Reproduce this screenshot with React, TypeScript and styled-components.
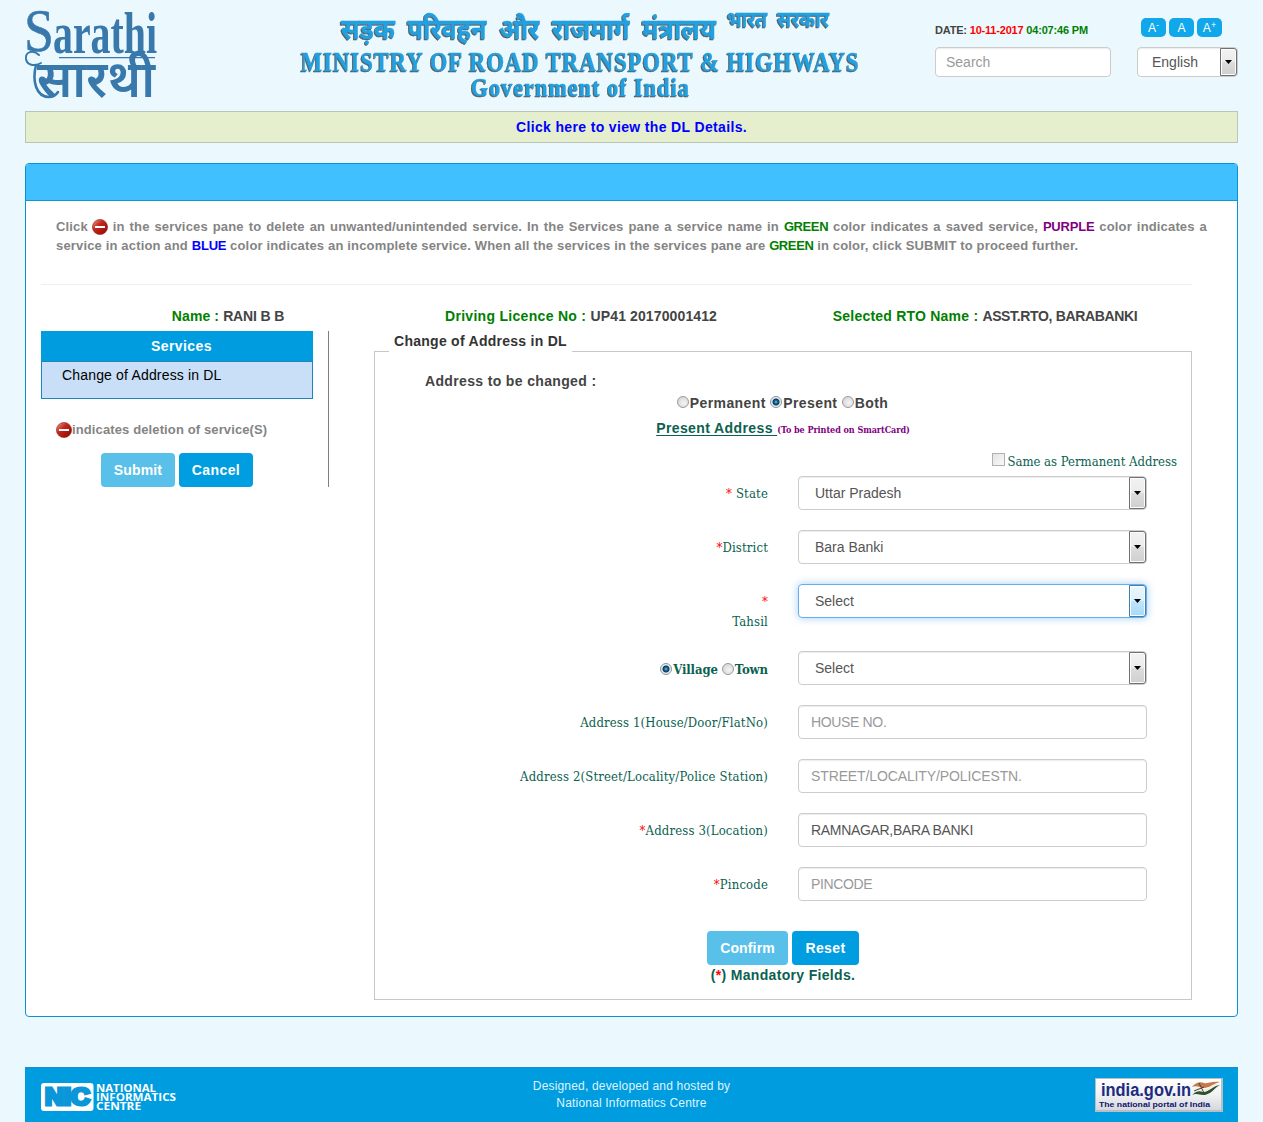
import React from "react";
import styled, { createGlobalStyle, css } from "styled-components";

const Global = createGlobalStyle`
  * { box-sizing: border-box; }
  body {
    margin: 0;
    background: #ebf9ff;
    font-family: "Liberation Sans", Arial, sans-serif;
    font-size: 14px;
    line-height: 20px;
    color: #444;
  }
`;

const Page = styled.div`
  width: 1213px;
  height: 1122px;
  margin: 0 auto;
  display: flex;
  flex-direction: column;
`;

const Header = styled.header`
  height: 111px;
  flex: none;
  display: flex;
`;
const LogoArea = styled.div`
  width: 271px;
  flex: none;
  padding-top: 5px;
`;
const TitleArea = styled.div`
  width: 639px;
  flex: none;
`;
const Tools = styled.div`
  flex: 1;
  padding-top: 18px;
`;
const ToolLine = styled.div<{ $h: number }>`
  display: flex;
  justify-content: space-between;
  height: ${(p) => p.$h}px;
`;
const DateText = styled.div`
  font-size: 11px;
  font-weight: bold;
  line-height: 24px;
  letter-spacing: -0.19px;
  white-space: nowrap;
`;
const SizeButtons = styled.div`
  display: flex;
  gap: 3px;
  padding-right: 16px;
`;
const SizeButton = styled.button`
  width: 25px;
  height: 19px;
  padding: 1px 0 0;
  border: 0;
  border-radius: 5px;
  background: #10a8ea;
  color: #fff;
  font: 12px/18px "Liberation Sans", Arial, sans-serif;
  sup {
    font-size: 9px;
    line-height: 0;
    vertical-align: 4px;
  }
`;

const Banner = styled.div`
  height: 32px;
  flex: none;
  border: 1px solid #bcc4ba;
  background: #e5eecd;
  color: #00f;
  font-weight: bold;
  letter-spacing: 0.35px;
  line-height: 30px;
  text-align: center;
`;

const Panel = styled.main`
  height: 854px;
  flex: none;
  margin-top: 20px;
  border: 1px solid #0a93d0;
  border-radius: 4px;
  background: #fff;
  overflow: hidden;
`;
const PanelHead = styled.div`
  height: 37px;
  background: #40c0ff;
  border-bottom: 1px solid #1295d1;
`;
const Notice = styled.p`
  margin: 0;
  padding: 16px 30px 0;
  height: 83px;
  font-size: 13px;
  font-weight: bold;
  line-height: 19px;
  letter-spacing: 0.16px;
  color: #848484;
  text-align: justify;
`;
const Ink = styled.span<{ $c: string; $ls?: number }>`
  color: ${(p) => p.$c};
  letter-spacing: ${(p) => (p.$ls === undefined ? "inherit" : p.$ls + "px")};
`;
const Rule = styled.div`
  height: 1px;
  margin: 0 45px 0 15px;
  background: #eee;
`;
const Holder = styled.div`
  display: grid;
  grid-template-columns: 374px 332px 476px;
  margin: 21px 0 0 15px;
  height: 25px;
  text-align: center;
  font-weight: bold;
  line-height: 21px;
`;
const Columns = styled.div`
  display: flex;
  align-items: flex-start;
  padding-left: 15px;
`;
const Side = styled.aside`
  width: 288px;
  height: 156px;
  border-right: 1px solid #808080;
`;
const ServiceHead = styled.div`
  width: 272px;
  height: 30px;
  background: #009ce0;
  color: #fff;
  font-weight: bold;
  letter-spacing: 0.4px;
  line-height: 30px;
  padding-left: 9px;
  text-align: center;
`;
const ServiceItem = styled.div`
  width: 272px;
  height: 38px;
  border: 1px solid #1c86bd;
  background: #c8dff7;
  color: #000;
  line-height: 27px;
  letter-spacing: 0.17px;
  padding-left: 20px;
`;
const Legend = styled.div`
  display: flex;
  align-items: center;
  height: 20px;
  margin: 21px 0 0 15px;
  color: #848484;
  font-size: 13px;
  font-weight: bold;
  letter-spacing: 0.12px;
`;
const Buttons = styled.div<{ $top: number; $left: number }>`
  display: flex;
  gap: 4px;
  padding: ${(p) => p.$top}px 0 0 ${(p) => p.$left}px;
`;
const Button = styled.button<{ $w: number; $dim?: boolean }>`
  width: ${(p) => p.$w}px;
  height: 34px;
  padding: 0;
  border: 0;
  border-radius: 4px;
  background: ${(p) => (p.$dim ? "#59c0ea" : "#009de0")};
  color: #fff;
  font: bold 14px "Liberation Sans", Arial, sans-serif;
  letter-spacing: ${(p) => (p.$dim ? 0.15 : 0.4)}px;
`;

const FormArea = styled.section`
  width: 818px;
  margin-left: 45px;
`;
const FormTitle = styled.h2`
  position: relative;
  width: 183px;
  height: 21px;
  margin: 0 0 -1px 15px;
  padding-left: 5px;
  background: #fff;
  color: #333;
  font-size: 14px;
  line-height: 20px;
  letter-spacing: 0.27px;
  white-space: nowrap;
`;
const FormBox = styled.div`
  height: 649px;
  border: 1px solid #c8c8c8;
`;
const Question = styled.div`
  padding: 19px 0 0 50px;
  font-weight: bold;
  letter-spacing: 0.35px;
  height: 41px;
`;
const Choices = styled.div`
  display: flex;
  justify-content: center;
  align-items: center;
  height: 20px;
  padding-right: 1px;
  font-weight: bold;
  letter-spacing: 0.42px;
  white-space: pre;
`;
const serif = css`
  font-family: "DejaVu Serif Condensed", "DejaVu Serif", serif;
`;
const AddressTitle = styled.div`
  height: 30px;
  line-height: 30px;
  text-align: center;
  white-space: pre;
  color: #0b6150;
  font-weight: bold;
  letter-spacing: 0.4px;
  u { text-decoration-thickness: 1px; text-underline-offset: 2px; }
  small {
    ${serif}
    font-size: 9px;
    letter-spacing: -0.07px;
    color: purple;
  }
`;
const SameAs = styled.label`
  ${serif}
  display: flex;
  justify-content: flex-end;
  align-items: center;
  gap: 2px;
  height: 20px;
  margin: 9px 14px 4px 0;
  color: #0b6150;
  font-size: 13px;
  line-height: 20px;
`;
const Box = styled.span`
  width: 13px;
  height: 13px;
  margin-top: -6px;
  border: 1px solid #b0b0b0;
  background: linear-gradient(135deg, #e2e2e2, #fafafa);
`;
const Dot = styled.span<{ $on?: boolean }>`
  width: 12px;
  height: 12px;
  margin: -3px 1px 0 0;
  border: 1px solid ${(p) => (p.$on ? "#8795a2" : "#9a9a9a")};
  border-radius: 50%;
  background: ${(p) =>
    p.$on
      ? "radial-gradient(circle at 50% 50%, #6cc4ee 0, #1c6fa0 1.5px, #0d3353 3px, #e8eef2 4px)"
      : "radial-gradient(circle at 60% 60%, #f4f4f4, #cfcfcf)"};
`;
const Row = styled.div<{ $h?: number }>`
  display: flex;
  justify-content: space-between;
  width: 772px;
  height: ${(p) => p.$h ?? 34}px;
  margin-bottom: 20px;
`;
const Label = styled.div<{ $bold?: boolean }>`
  ${serif}
  width: 393px;
  display: flex;
  flex-wrap: wrap;
  justify-content: flex-end;
  align-content: flex-start;
  align-items: center;
  padding-top: ${(p) => (p.$bold ? 9 : 8)}px;
  text-align: right;
  white-space: pre;
  color: #0b6150;
  font-size: 13px;
  font-weight: ${(p) => (p.$bold ? "bold" : "normal")};
  letter-spacing: ${(p) => (p.$bold ? -0.1 : 0.15)}px;
`;
const Stack = styled.div`
  display: flex;
  flex-direction: column;
  align-items: flex-end;
`;
const Star = styled.span`
  color: #f00;
`;
const field = css`
  border: 1px solid #ccc;
  border-radius: 4px;
  background: #fff;
  box-shadow: inset 0 1px 1px rgba(0, 0, 0, 0.075);
  color: #555;
  font-family: "Liberation Sans", Arial, sans-serif;
  font-size: 14px;
`;
const Input = styled.input<{ $w: number; $h?: number; $pad?: number; $ls?: number }>`
  ${field}
  width: ${(p) => p.$w}px;
  height: ${(p) => p.$h ?? 34}px;
  padding: 0 ${(p) => p.$pad ?? 12}px;
  letter-spacing: ${(p) => p.$ls ?? 0}px;
  outline: 0;
  &::placeholder { color: #999; opacity: 1; }
`;
const SelectBox = styled.div<{ $w: number; $h: number; $pad: number; $focus?: boolean }>`
  ${field}
  display: flex;
  justify-content: space-between;
  width: ${(p) => p.$w}px;
  height: ${(p) => p.$h}px;
  padding-left: ${(p) => p.$pad}px;
  line-height: ${(p) => p.$h - 2}px;
  ${(p) =>
    p.$focus &&
    css`
      border-color: #66afe9;
      box-shadow: 0 0 8px rgba(102, 175, 233, 0.6);
    `}
`;
const Arrow = styled.span<{ $focus?: boolean }>`
  width: 17px;
  display: flex;
  align-items: center;
  justify-content: center;
  border: 1px solid ${(p) => (p.$focus ? "#3c7fb1" : "#707070")};
  border-radius: 0 3px 3px 0;
  box-shadow: inset 0 0 0 1px #fcfcfc;
  background: ${(p) =>
    p.$focus
      ? "linear-gradient(#eaf6fd 0%, #d9f0fc 50%, #bee6fd 50%, #a7d9f5 100%)"
      : "linear-gradient(#f2f2f2 0%, #ebebeb 50%, #dddddd 50%, #cfcfcf 100%)"};
`;
const Mandatory = styled.div`
  text-align: center;
  font-weight: bold;
  letter-spacing: 0.33px;
  color: #0b6150;
`;

const Footer = styled.footer`
  height: 55px;
  flex: none;
  margin-top: 50px;
  padding: 10px 15px 0;
  display: flex;
  justify-content: space-between;
  background: #009ce0;
  border-top: 1px solid #1a8fc6;
`;
const FooterSide = styled.div<{ $right?: boolean }>`
  width: 140px;
  display: flex;
  justify-content: ${(p) => (p.$right ? "flex-end" : "flex-start")};
`;
const Credit = styled.div`
  color: #dff4ff;
  font-size: 12px;
  line-height: 17px;
  letter-spacing: 0.18px;
  text-align: center;
`;

const Stop = styled.svg<{ $inline?: boolean }>`
  flex: none;
  vertical-align: ${(p) => (p.$inline ? "-4px" : "baseline")};
  margin-left: ${(p) => (p.$inline ? -1 : 0)}px;
`;
const StopIcon = ({ inline = false }: { inline?: boolean }) => (
  <Stop $inline={inline} width="16" height="16" viewBox="0 0 16 16">
    <defs>
      <linearGradient id="stop" x1="0" y1="0" x2="1" y2="1">
        <stop offset="0" stopColor="#f0a49c" />
        <stop offset="0.4" stopColor="#c2281c" />
        <stop offset="1" stopColor="#8f0500" />
      </linearGradient>
    </defs>
    <circle cx="8" cy="8" r="7.6" fill="url(#stop)" stroke="#9a1a12" strokeWidth="0.6" />
    <rect x="3" y="7" width="10" height="2" fill="#fff" />
  </Stop>
);

const Select = ({
  value,
  w = 349,
  h = 34,
  pad = 16,
  focus,
}: {
  value: string;
  w?: number;
  h?: number;
  pad?: number;
  focus?: boolean;
}) => (
  <SelectBox $w={w} $h={h} $pad={pad} $focus={focus} role="combobox">
    <span>{value}</span>
    <Arrow $focus={focus}>
      <svg width="7" height="4" viewBox="0 0 7 4">
        <path d="M0 0h7L3.5 4z" fill="#000" />
      </svg>
    </Arrow>
  </SelectBox>
);

const LogoSvg = styled.svg`
  display: block;
  overflow: visible;
`;
const SarathiLogo = () => (
  <LogoSvg width="136" height="100" viewBox="0 0 136 100" fill="#3878ab">
    <g fontFamily="Liberation Serif, serif">
      <text x="-1" y="46" fontSize="62" stroke="#3878ab" strokeWidth="0.5" textLength="30" lengthAdjust="spacingAndGlyphs">
        S
      </text>
      <text x="28" y="48" fontSize="59" fontWeight="bold" textLength="104" lengthAdjust="spacingAndGlyphs">
        arathi
      </text>
    </g>
    <path d="M34 52.6H130" stroke="#3878ab" strokeWidth="1.3" />
    <text x="12" y="92" fontSize="52" fontWeight="600" fontFamily="Noto Sans, Noto Sans Devanagari, sans-serif" textLength="118" lengthAdjust="spacingAndGlyphs">
      सारथी
    </text>
    <g fill="none" stroke="#3878ab" strokeLinecap="round">
      <path d="M14 50C8 44 0 47 1 54C2 60 9 62 16 58" strokeWidth="2" />
      <path d="M11 60C7 76 11 92 24 92C28 92 31 90 33 87" strokeWidth="2.6" />
    </g>
  </LogoSvg>
);

const Shadowed = styled.svg`
  display: block;
  overflow: visible;
  fill: #22a0e0;
  stroke: #22a0e0;
  stroke-width: 0.35px;
  font-weight: bold;
  filter: drop-shadow(-0.8px 1px 0.7px rgba(40, 40, 40, 0.75));
`;
const MinistryTitle = () => (
  <Shadowed width="580" height="108" viewBox="0 0 580 108">
    <g fontFamily="Noto Sans, Noto Sans Devanagari, sans-serif">
      <text x="45" y="39" fontSize="29" wordSpacing="7" textLength="375" lengthAdjust="spacingAndGlyphs">
        सड़क परिवहन और राजमार्ग मंत्रालय
      </text>
      <text x="431" y="27" fontSize="22" wordSpacing="6" textLength="102" lengthAdjust="spacingAndGlyphs">
        भारत सरकार
      </text>
    </g>
    <g fontFamily="Liberation Serif, serif">
      <text x="5" y="71" fontSize="27.5" letterSpacing="1.4" textLength="559" lengthAdjust="spacingAndGlyphs">
        MINISTRY OF ROAD TRANSPORT &amp; HIGHWAYS
      </text>
      <text x="175" y="96" fontSize="25" letterSpacing="1.2" textLength="219" lengthAdjust="spacingAndGlyphs">
        Government of India
      </text>
    </g>
  </Shadowed>
);

const NicLogo = () => (
  <LogoSvg width="140" height="34" viewBox="0 0 140 34" fontWeight="bold">
    <rect x="1" y="5" width="52.5" height="28" rx="3" fill="#fff" />
    <text x="5" y="27.2" fontSize="23" fontFamily="Liberation Sans, sans-serif" fill="#0a96d8" stroke="#0a96d8" strokeWidth="3.2" textLength="45" lengthAdjust="spacingAndGlyphs">
      NIC
    </text>
    <g fill="#fff" fontFamily="Open Sans, sans-serif" fontSize="11">
      <text x="56" y="13.5" textLength="60" lengthAdjust="spacingAndGlyphs">NATIONAL</text>
      <text x="56" y="22.7" textLength="80" lengthAdjust="spacingAndGlyphs">INFORMATICS</text>
      <text x="56" y="32" textLength="45" lengthAdjust="spacingAndGlyphs">CENTRE</text>
    </g>
  </LogoSvg>
);

const IndiaLogo = () => (
  <svg width="128" height="34" viewBox="0 0 128 34">
    <defs>
      <linearGradient id="plate" x1="0" y1="0" x2="0" y2="1">
        <stop offset="0" stopColor="#fff" />
        <stop offset="0.5" stopColor="#f1f2f4" />
        <stop offset="1" stopColor="#d4d8dc" />
      </linearGradient>
    </defs>
    <rect width="128" height="34" fill="#b4bfc6" />
    <rect x="1" y="1" width="125" height="31" fill="url(#plate)" />
    <text x="6" y="18" fontSize="18" fontWeight="bold" fontFamily="Liberation Sans, sans-serif" fill="#1c2b80" textLength="90" lengthAdjust="spacingAndGlyphs">
      india.gov.in
    </text>
    <text x="4" y="29" fontSize="8" fontWeight="bold" fontFamily="Liberation Sans, sans-serif" fill="#14146c" textLength="111" lengthAdjust="spacingAndGlyphs">
      The national portal of India
    </text>
    <path d="M97 9c3-4 8-6 12-4 3 1 7-2 16-1-7 2-11 6-16 6-4 0-7-3-12-1z" fill="#c8784a" />
    <path d="M98 12c4-3 8-3 11-1 4 1 8-5 15-6-4 4-8 9-14 9-4 0-7-3-12-2z" fill="#f4efe2" />
    <path d="M97 17c5-5 8-4 11-3 5 1 9-6 17-7-6 3-9 10-17 10-4 0-6-2-11 0z" fill="#2c5230" />
    <path d="M104 5l6 12M99 13l10-4" stroke="#4a4030" strokeWidth="1" fill="none" />
  </svg>
);

export default function App() {
  return (
    <>
      <Global />
      <Page>
        <Header>
          <LogoArea>
            <SarathiLogo />
          </LogoArea>
          <TitleArea>
            <MinistryTitle />
          </TitleArea>
          <Tools>
            <ToolLine $h={29}>
              <DateText>
                DATE: <Ink $c="#f00">10-11-2017</Ink> <Ink $c="green">04:07:46 PM</Ink>
              </DateText>
              <SizeButtons>
                <SizeButton>A<sup>-</sup></SizeButton>
                <SizeButton>A</SizeButton>
                <SizeButton>A<sup>+</sup></SizeButton>
              </SizeButtons>
            </ToolLine>
            <ToolLine $h={30}>
              <Input $w={176} $h={30} $pad={10} placeholder="Search" />
              <Select value="English" w={101} h={30} pad={14} />
            </ToolLine>
          </Tools>
        </Header>

        <Banner>Click here to view the DL Details.</Banner>

        <Panel>
          <PanelHead />
          <Notice>
            Click <StopIcon inline /> in the services pane to delete an unwanted/unintended service. In the
            Services pane a service name in <Ink $c="green" $ls={-0.4}>GREEN</Ink> color indicates a saved service,{" "}
            <Ink $c="purple" $ls={-0.2}>PURPLE</Ink> color indicates a service in action and{" "}
            <Ink $c="#00f" $ls={-0.2}>BLUE</Ink> color indicates an incomplete service. When all the services in
            the services pane are <Ink $c="green" $ls={-0.4}>GREEN</Ink> in color, click SUBMIT to proceed further.
          </Notice>
          <Rule />
          <Holder>
            <div><Ink $c="green" $ls={0.1}>Name : </Ink><Ink $c="#444" $ls={-0.15}>RANI B B</Ink></div>
            <div><Ink $c="green" $ls={0.3}>Driving Licence No : </Ink><Ink $c="#444" $ls={0.12}>UP41 20170001412</Ink></div>
            <div><Ink $c="green" $ls={0.22}>Selected RTO Name : </Ink><Ink $c="#444" $ls={-0.35}>ASST.RTO, BARABANKI</Ink></div>
          </Holder>
          <Columns>
            <Side>
              <ServiceHead>Services</ServiceHead>
              <ServiceItem>Change of Address in DL</ServiceItem>
              <Legend><StopIcon />indicates deletion of service(S)</Legend>
              <Buttons $top={13} $left={60}>
                <Button $w={74} $dim>Submit</Button>
                <Button $w={74}>Cancel</Button>
              </Buttons>
            </Side>
            <FormArea>
              <FormTitle>Change of Address in DL</FormTitle>
              <FormBox>
                <Question>Address to be changed :</Question>
                <Choices>
                  <Dot />Permanent <Dot $on />Present <Dot />Both
                </Choices>
                <AddressTitle>
                  <u>Present Address </u><small>(To be Printed on SmartCard)</small>
                </AddressTitle>
                <SameAs><Box />Same as Permanent Address</SameAs>
                <Row>
                  <Label><Star>* </Star>State</Label>
                  <Select value="Uttar Pradesh" />
                </Row>
                <Row>
                  <Label><Star>*</Star>District</Label>
                  <Select value="Bara Banki" />
                </Row>
                <Row $h={47}>
                  <Label>
                    <Stack><Star>*</Star><span>Tahsil</span></Stack>
                  </Label>
                  <Select value="Select" focus />
                </Row>
                <Row>
                  <Label $bold><Dot $on />Village <Dot />Town</Label>
                  <Select value="Select" />
                </Row>
                <Row>
                  <Label>Address 1(House/Door/FlatNo)</Label>
                  <Input $w={349} $ls={-0.35} placeholder="HOUSE NO." />
                </Row>
                <Row>
                  <Label>Address 2(Street/Locality/Police Station)</Label>
                  <Input $w={349} $ls={-0.12} placeholder="STREET/LOCALITY/POLICESTN." />
                </Row>
                <Row>
                  <Label><Star>*</Star>Address 3(Location)</Label>
                  <Input $w={349} $ls={-0.32} defaultValue="RAMNAGAR,BARA BANKI" />
                </Row>
                <Row>
                  <Label><Star>*</Star>Pincode</Label>
                  <Input $w={349} $ls={-0.35} placeholder="PINCODE" />
                </Row>
                <Buttons $top={10} $left={332}>
                  <Button $w={81} $dim>Confirm</Button>
                  <Button $w={67}>Reset</Button>
                </Buttons>
                <Mandatory>(<Star>*</Star>) Mandatory Fields.</Mandatory>
              </FormBox>
            </FormArea>
          </Columns>
        </Panel>

        <Footer>
          <FooterSide><NicLogo /></FooterSide>
          <Credit>
            Designed, developed and hosted by
            <br />
            National Informatics Centre
          </Credit>
          <FooterSide $right><IndiaLogo /></FooterSide>
        </Footer>
      </Page>
    </>
  );
}
